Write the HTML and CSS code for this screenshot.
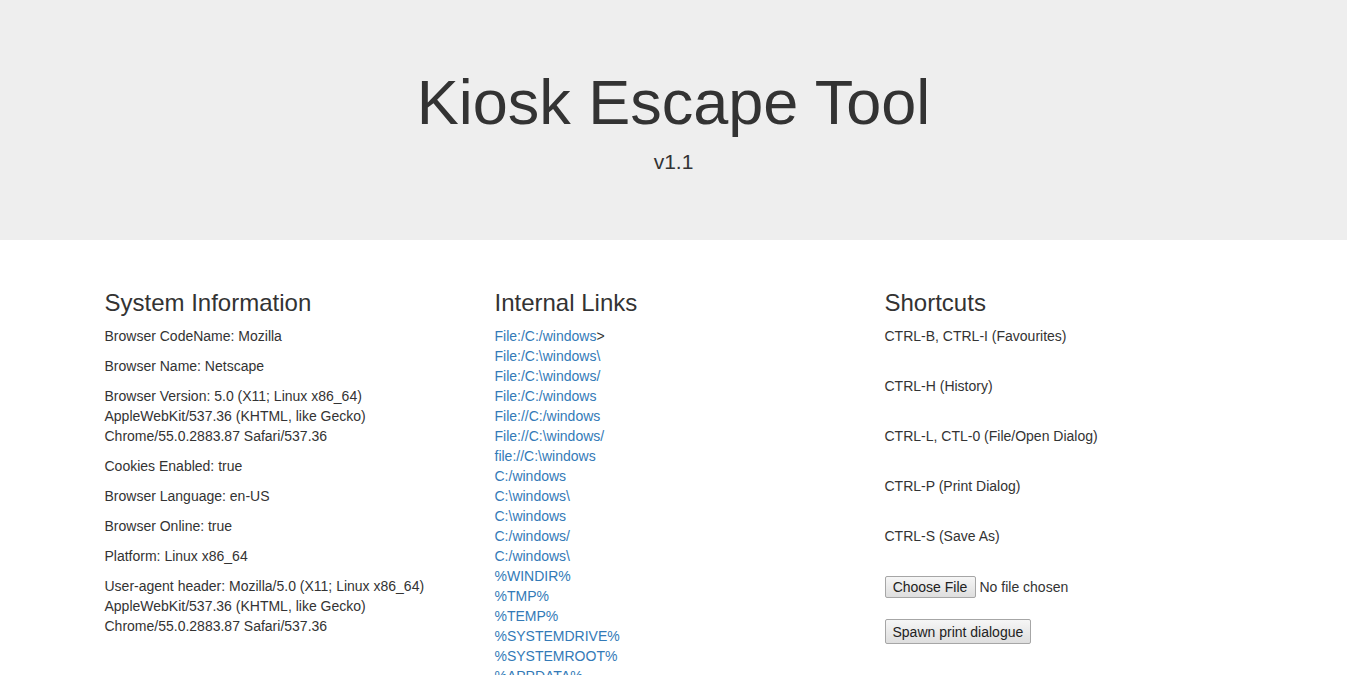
FILE: index.html
```html
<!DOCTYPE html>
<html lang="en">
<head>
<meta charset="utf-8">
<title>Kiosk Escape Tool</title>
<link rel="stylesheet" href="styles.css">
</head>
<body>
<div class="jumbotron">
  <div class="container center">
    <h1 class="title">Kiosk Escape Tool</h1>
    <p class="version">v1.1</p>
  </div>
</div>
<div class="container">
  <div class="row">
    <div class="col">
      <h3 class="heading">System Information</h3>
      <p>Browser CodeName: Mozilla</p>
      <p>Browser Name: Netscape</p>
      <p>Browser Version: 5.0 (X11; Linux x86_64) AppleWebKit/537.36 (KHTML, like Gecko) Chrome/55.0.2883.87 Safari/537.36</p>
      <p>Cookies Enabled: true</p>
      <p>Browser Language: en-US</p>
      <p>Browser Online: true</p>
      <p>Platform: Linux x86_64</p>
      <p>User-agent header: Mozilla/5.0 (X11; Linux x86_64) AppleWebKit/537.36 (KHTML, like Gecko) Chrome/55.0.2883.87 Safari/537.36</p>
    </div>
    <div class="col">
      <h3 class="heading">Internal Links</h3>
      <div class="links">
        <div><a href="#">File:/C:/windows</a>&gt;</div>
        <div><a href="#">File:/C:\windows\</a></div>
        <div><a href="#">File:/C:\windows/</a></div>
        <div><a href="#">File:/C:/windows</a></div>
        <div><a href="#">File://C:/windows</a></div>
        <div><a href="#">File://C:\windows/</a></div>
        <div><a href="#">file://C:\windows</a></div>
        <div><a href="#">C:/windows</a></div>
        <div><a href="#">C:\windows\</a></div>
        <div><a href="#">C:\windows</a></div>
        <div><a href="#">C:/windows/</a></div>
        <div><a href="#">C:/windows\</a></div>
        <div><a href="#">%WINDIR%</a></div>
        <div><a href="#">%TMP%</a></div>
        <div><a href="#">%TEMP%</a></div>
        <div><a href="#">%SYSTEMDRIVE%</a></div>
        <div><a href="#">%SYSTEMROOT%</a></div>
        <div><a href="#">%APPDATA%</a></div>
        <div><a href="#">%HOMEDRIVE%</a></div>
        <div><a href="#">%HOMESHARE</a></div>
      </div>
    </div>
    <div class="col">
      <h3 class="heading">Shortcuts</h3>
      <p class="shortcut">CTRL-B, CTRL-I (Favourites)</p>
      <p class="shortcut">CTRL-H (History)</p>
      <p class="shortcut">CTRL-L, CTL-0 (File/Open Dialog)</p>
      <p class="shortcut">CTRL-P (Print Dialog)</p>
      <p class="shortcut">CTRL-S (Save As)</p>
      <div class="file-row">
        <button class="btn btn-file" type="button">Choose File</button>
        <span class="file-status">No file chosen</span>
      </div>
      <button class="btn btn-print" type="button">Spawn print dialogue</button>
    </div>
  </div>
</div>
</body>
</html>
```
FILE: styles.css
```css
html, body {
  margin: 0;
  padding: 0;
}
body {
  font-family: "Liberation Sans", Arial, Helvetica, sans-serif;
  font-size: 14px;
  line-height: 20px;
  color: #333;
  background: #fff;
}
.container {
  box-sizing: border-box;
  width: 1170px;
  margin: 0 auto;
  padding: 0 15px;
}
.center {
  text-align: center;
}
.jumbotron {
  background: #eee;
  padding: 48px 0;
  margin-bottom: 30px;
}
.title {
  font-size: 63px;
  font-weight: 500;
  line-height: 1.1;
  margin: 20px 0 10px;
}
.version {
  font-size: 21px;
  line-height: 30px;
  margin: 0 0 15px;
}
.row {
  display: flex;
  margin: 0 -15px 0 -14px;
}
.col {
  box-sizing: border-box;
  flex: 0 0 390px;
  width: 390px;
  padding: 0 15px;
}
.heading {
  font-size: 24px;
  font-weight: 500;
  line-height: 26px;
  margin: 20px 0 10px;
}
p {
  margin: 0 0 10px;
}
.links a {
  color: #337ab7;
  text-decoration: none;
}
.shortcut {
  margin-bottom: 30px;
}
.file-row {
  display: flex;
  align-items: center;
  gap: 4px;
  margin-bottom: 21px;
}
.btn {
  font-family: "Liberation Sans", Arial, Helvetica, sans-serif;
  font-size: 14px;
  color: #222;
  box-sizing: border-box;
  border: 1px solid #a6a6a6;
  border-radius: 2px;
  background: linear-gradient(#f6f6f6, #dedede);
  padding: 0 7px;
  margin: 0;
  line-height: 16px;
  white-space: nowrap;
}
.btn-file {
  height: 22px;
  width: 91px;
}
.file-status {
  color: #333;
}
.btn-print {
  height: 25px;
  width: 146px;
}
```
